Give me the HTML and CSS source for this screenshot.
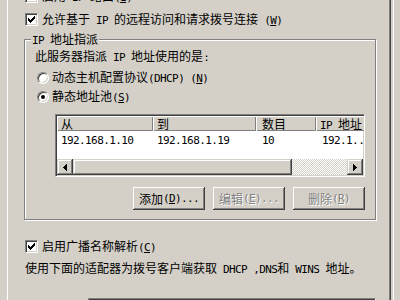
FILE: index.html
```html
<!DOCTYPE html>
<html>
<head>
<meta charset="utf-8">
<link rel="stylesheet" href="styles.css">
</head>
<body>
<div class="outer">
  <div class="page">
    <div class="content">
      <div class="row chk-row">
        <span class="cb"><svg width="7" height="7" viewBox="0 0 7 7" shape-rendering="crispEdges"><path d="M0 2h1v3H0zM1 3h1v3H1zM2 4h1v3H2zM3 3h1v3H3zM4 2h1v3H4zM5 1h1v3H5zM6 0h1v3H6z" fill="#000"/></svg></span>
        <span class="lbl">启用<span class="en"> IP </span>路由<span class="en">(<u>I</u>)</span></span>
      </div>
      <div class="row chk-row r1">
        <span class="cb"><svg width="7" height="7" viewBox="0 0 7 7" shape-rendering="crispEdges"><path d="M0 2h1v3H0zM1 3h1v3H1zM2 4h1v3H2zM3 3h1v3H3zM4 2h1v3H4zM5 1h1v3H5zM6 0h1v3H6z" fill="#000"/></svg></span>
        <span class="lbl">允许基于<span class="en"> IP </span>的远程访问和请求拨号连接<span class="en"> (<u>W</u>)</span></span>
      </div>
      <div class="group">
        <div class="legend"><span class="en">IP </span>地址指派</div>
        <div class="desc">此服务器指派<span class="en"> IP </span>地址使用的是<span class="en">:</span></div>
        <div class="row radio-row rr1"><span class="rb"></span><span class="rlbl">动态主机配置协议<span class="en">(DHCP) (<u>N</u>)</span></span></div>
        <div class="row radio-row rr2"><span class="rb on"></span><span class="rlbl">静态地址池<span class="en">(<u>S</u>)</span></span></div>
        <div class="list">
          <div class="lhead">
            <div class="hc c1">从</div>
            <div class="hc c2">到</div>
            <div class="hc c3">数目</div>
            <div class="hc c4"><span class="en">IP </span>地址</div>
          </div>
          <div class="lrow">
            <div class="cell c1"><span class="en">192.168.1.10</span></div>
            <div class="cell c2"><span class="en">192.168.1.19</span></div>
            <div class="cell c3"><span class="en">10</span></div>
            <div class="cell c4"><span class="en">192.1..</span></div>
          </div>
          <div class="lspace"></div>
          <div class="hscroll">
            <div class="sbtn"><svg width="4" height="7" viewBox="0 0 4 7" shape-rendering="crispEdges"><path d="M3 0h1v7H3zM2 1h1v5H2zM1 2h1v3H1zM0 3h1v1H0z" fill="#000"/></svg></div>
            <div class="thumb"></div>
            <div class="track"></div>
            <div class="sbtn"><svg width="4" height="7" viewBox="0 0 4 7" shape-rendering="crispEdges"><path d="M0 0h1v7H0zM1 1h1v5H1zM2 2h1v3H2zM3 3h1v1H3z" fill="#000"/></svg></div>
          </div>
        </div>
        <div class="btns">
          <div class="btn">添加<span class="en">(<u>D</u>)...</span></div>
          <div class="btn dis">编辑<span class="en">(<u>E</u>)...</span></div>
          <div class="btn dis">删除<span class="en">(<u>R</u>)</span></div>
        </div>
      </div>
      <div class="row chk-row r3">
        <span class="cb"><svg width="7" height="7" viewBox="0 0 7 7" shape-rendering="crispEdges"><path d="M0 2h1v3H0zM1 3h1v3H1zM2 4h1v3H2zM3 3h1v3H3zM4 2h1v3H4zM5 1h1v3H5zM6 0h1v3H6z" fill="#000"/></svg></span>
        <span class="lbl">启用广播名称解析<span class="en">(<u>C</u>)</span></span>
      </div>
      <div class="note">使用下面的适配器为拨号客户端获取<span class="en"> DHCP ,DNS</span>和<span class="en"> WINS </span>地址。</div>
      <div class="combo"></div>
    </div>
  </div>
</div>
</body>
</html>
```
FILE: styles.css
```css
html, body {
  margin: 0;
  padding: 0;
}
body {
  width: 400px;
  height: 300px;
  overflow: hidden;
  background: #d4d0c8;
  font-family: "Noto Sans CJK SC", "Liberation Sans", sans-serif;
  font-size: 12px;
  color: #000;
}
.en {
  font-family: "DejaVu Sans Mono", "Liberation Mono", monospace;
  font-size: 11px;
  letter-spacing: -0.6px;
  white-space: pre;
}
.outer {
  width: 394px;
  height: 300px;
  box-sizing: border-box;
  border-right: 1px solid #fff;
}
.page {
  margin-left: 7px;
  width: 384px;
  height: 300px;
  box-sizing: border-box;
  border-left: 1px solid #fff;
  border-right: 1px solid #404040;
  box-shadow: inset -1px 0 0 #808080;
  display: flex;
  flex-direction: column;
}
.content {
  margin-top: -10px;
  padding-left: 17px;
  display: flex;
  flex-direction: column;
  align-items: flex-start;
}
.row {
  display: flex;
  align-items: center;
  height: 13px;
  line-height: 14px;
  white-space: nowrap;
}
.cb {
  width: 13px;
  height: 13px;
  box-sizing: border-box;
  background: #fff;
  border: 1px solid;
  border-color: #808080 #fff #fff #808080;
  box-shadow: inset 1px 1px 0 #404040, inset -1px -1px 0 #d4d0c8;
  display: flex;
  padding: 2px 0 0 2px;
  flex: none;
}
.cb svg {
  display: block;
}
.lbl {
  margin-left: 4px;
}
.r1 {
  margin-top: 10px;
}
.group {
  margin-top: 13px;
  margin-left: -1px;
  width: 352px;
  box-sizing: border-box;
  border: 1px solid #808080;
  box-shadow: inset 1px 1px 0 #fff, 1px 1px 0 #fff;
  padding: 0 10px 9px 10px;
  display: flex;
  flex-direction: column;
  align-items: flex-start;
}
.legend {
  margin-top: -8px;
  margin-left: -4px;
  padding: 0 1px;
  height: 14px;
  line-height: 14px;
  background: #d4d0c8;
  white-space: nowrap;
}
.desc {
  margin-top: 3px;
  height: 14px;
  line-height: 14px;
  white-space: nowrap;
}
.rb {
  width: 12px;
  height: 12px;
  box-sizing: border-box;
  border-radius: 50%;
  background: #fff;
  border: 1px solid;
  border-color: #808080 #fff #fff #808080;
  box-shadow: inset 1px 1px 0 #404040, inset -1px -1px 0 #d4d0c8;
  margin-left: 2px;
  display: flex;
  align-items: center;
  justify-content: center;
  flex: none;
}
.rb.on::after {
  content: "";
  width: 4px;
  height: 4px;
  border-radius: 50%;
  background: #000;
}
.rlbl {
  margin-left: 3px;
}
.rr1 {
  margin-top: 8px;
}
.rr2 {
  margin-top: 6px;
}
.list {
  margin-top: 11px;
  margin-left: 20px;
  width: 310px;
  height: 63px;
  box-sizing: border-box;
  background: #fff;
  border: 1px solid;
  border-color: #808080 #fff #fff #808080;
  box-shadow: inset 1px 1px 0 #404040, inset -1px -1px 0 #d4d0c8;
  padding: 1px;
  display: flex;
  flex-direction: column;
  overflow: hidden;
}
.lhead {
  display: flex;
  height: 15px;
  flex: none;
}
.hc {
  height: 15px;
  line-height: 15px;
  box-sizing: border-box;
  padding-left: 4px;
  background: #d4d0c8;
  box-shadow: inset 1px 1px 0 #fff, inset -1px -1px 0 #808080;
  white-space: nowrap;
  overflow: hidden;
  flex: none;
}
.c1 { width: 96px; }
.c2 { width: 103px; }
.c3 { width: 60px; }
.c4 { width: 60px; }
.hc.c3 {
  padding-left: 6px;
}
.lrow {
  display: flex;
  height: 16px;
  line-height: 16px;
  flex: none;
}
.cell {
  box-sizing: border-box;
  padding-left: 4px;
  white-space: nowrap;
  overflow: hidden;
  flex: none;
}
.cell.c3 {
  padding-left: 6px;
}
.cell.c4 {
  padding-left: 6px;
}
.lspace {
  flex: 1;
}
.hscroll {
  display: flex;
  height: 16px;
  flex: none;
}
.sbtn {
  width: 16px;
  height: 16px;
  box-sizing: border-box;
  background: #d4d0c8;
  box-shadow: inset -1px -1px 0 #404040, inset 1px 1px 0 #d4d0c8, inset -2px -2px 0 #808080, inset 2px 2px 0 #fff;
  display: flex;
  align-items: center;
  justify-content: center;
  flex: none;
}
.sbtn svg {
  display: block;
}
.thumb {
  width: 219px;
  height: 16px;
  background: #d4d0c8;
  box-shadow: inset -1px -1px 0 #404040, inset 1px 1px 0 #d4d0c8, inset -2px -2px 0 #808080, inset 2px 2px 0 #fff;
  flex: none;
}
.track {
  flex: 1;
  height: 16px;
  background: repeating-conic-gradient(#fff 0 25%, #d4d0c8 0 50%) 0 0 / 2px 2px;
}
.btns {
  margin-top: 10px;
  align-self: stretch;
  display: flex;
  justify-content: flex-end;
  gap: 8px;
}
.btn {
  width: 72px;
  height: 23px;
  box-sizing: border-box;
  background: #d4d0c8;
  box-shadow: inset -1px -1px 0 #404040, inset 1px 1px 0 #fff, inset -2px -2px 0 #808080, inset 2px 2px 0 #d4d0c8;
  display: flex;
  align-items: center;
  justify-content: center;
  line-height: 14px;
  white-space: nowrap;
}
.btn.dis {
  color: #808080;
  text-shadow: 1px 1px 0 #fff;
}
.r3 {
  margin-top: 20px;
}
.note {
  margin-top: 8px;
  height: 14px;
  line-height: 14px;
  white-space: nowrap;
}
.combo {
  margin-top: 23px;
  margin-left: 63px;
  width: 288px;
  height: 21px;
  box-sizing: border-box;
  background: #fff;
  border: 1px solid;
  border-color: #808080 #fff #fff #808080;
  box-shadow: inset 1px 1px 0 #404040;
}
```
